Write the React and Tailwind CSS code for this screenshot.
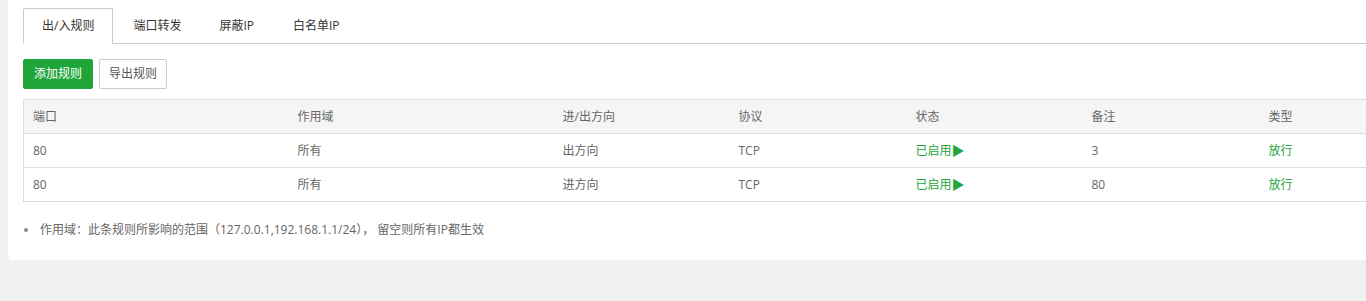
import React from "react";

const cols = [
  { label: "端口", w: "w-[265px]" },
  { label: "作用域", w: "w-[265px]" },
  { label: "进/出方向", w: "w-[176px]" },
  { label: "协议", w: "w-[177px]" },
  { label: "状态", w: "w-[176px]" },
  { label: "备注", w: "w-[177px]" },
  { label: "类型", w: "w-[176px]" },
];

const rows = [
  ["80", "所有", "出方向", "TCP", "status", "3", "放行"],
  ["80", "所有", "进方向", "TCP", "status", "80", "放行"],
];

const font = { fontFamily: '"Open Sans","Noto Sans CJK SC",sans-serif' };

const tabs = [
  { t: "出/入规则", cls: "h-[36px] px-[18px] border border-[#ccc] border-b-white rounded-t-[2px] bg-white leading-[34px] text-[#333] -mb-px" },
  { t: "端口转发", cls: "h-[35px] px-[20px] leading-[35px] text-[#333]" },
  { t: "屏蔽IP", cls: "h-[35px] pl-[18px] pr-[19px] leading-[35px] text-[#333]" },
  { t: "白名单IP", cls: "h-[35px] px-[20px] leading-[35px] text-[#333]" },
];

export default function App() {
  return (
    <div
      className="w-[1366px] h-[301px] overflow-hidden bg-[#f1f1f1] pl-[8px] text-[12px] text-[#666]"
      style={font}
    >
      <div className="w-[1500px] bg-white rounded-b-[5px] pl-[15px] pt-[8px] pb-[20px]">
        {/* tabs */}
        <div className="flex h-[36px] border-b border-[#ccc]">
          {tabs.map((x) => (
            <div key={x.t} className={x.cls}>
              {x.t}
            </div>
          ))}
        </div>
        {/* buttons */}
        <div className="flex gap-[6px] mt-[15px]">
          <button className="h-[30px] px-[10px] rounded-[2px] bg-[#20a53a] border border-[#20a53a] text-white text-[12px] leading-[28px]">
            添加规则
          </button>
          <button className="h-[30px] px-[9px] rounded-[2px] bg-white border border-[#ccc] text-[#555] text-[12px] leading-[28px]">
            导出规则
          </button>
        </div>
        {/* table */}
        <table className="mt-[10px] table-fixed border-collapse border border-[#ddd] w-[1412px]">
          <thead>
            <tr className="bg-[#f5f5f5]">
              {cols.map((c) => (
                <th
                  key={c.label}
                  className={`${c.w} h-[34px] px-[9px] text-left font-normal text-[#666] border-b border-[#ddd]`}
                >
                  {c.label}
                </th>
              ))}
            </tr>
          </thead>
          <tbody>
            {rows.map((r, ri) => (
              <tr key={ri} className="border-b border-[#ddd]">
                {r.map((v, ci) => (
                  <td key={ci} className="h-[34px] px-[9px] text-left">
                    {v === "status" ? (
                      <span className="text-[#20a53a]">
                        已启用<span className="text-[13px]">▶</span>
                      </span>
                    ) : ci === 6 ? (
                      <span className="text-[#20a53a]">{v}</span>
                    ) : (
                      v
                    )}
                  </td>
                ))}
              </tr>
            ))}
          </tbody>
        </table>
        {/* notes */}
        <ul className="mt-[18px]">
          <li className="flex items-center h-[20px]">
            <span className="w-[4px] h-[4px] rounded-full bg-[#888] ml-[1px] mr-[12px]" />
            作用域：此条规则所影响的范围（127.0.0.1,192.168.1.1/24）， 留空则所有IP都生效
          </li>
        </ul>
      </div>
    </div>
  );
}
